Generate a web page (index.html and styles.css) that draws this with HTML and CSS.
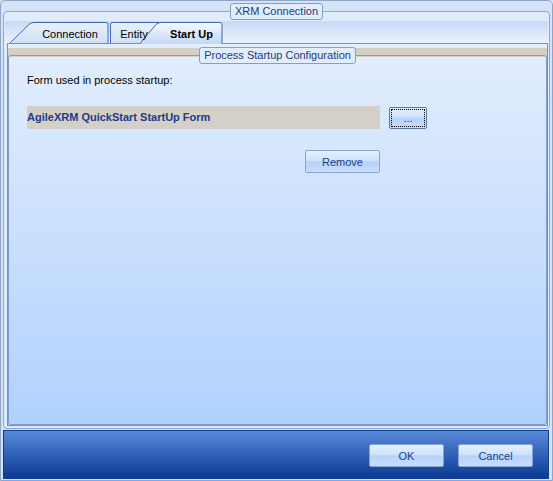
FILE: index.html
```html
<!DOCTYPE html>
<html>
<head>
<meta charset="utf-8">
<link rel="stylesheet" href="styles.css">
</head>
<body>
<div class="window">
  <fieldset class="frame">
    <legend class="frame-title">XRM Connection</legend>
    <div class="tabstrip">
      <svg class="tabshapes" width="230" height="23" viewBox="0 0 230 23">
        <defs>
          <linearGradient id="tabOff" x1="0" y1="0" x2="0" y2="1">
            <stop offset="0" stop-color="#e9f1fd"/>
            <stop offset="1" stop-color="#cfe0f8"/>
          </linearGradient>
          <linearGradient id="tabOn" x1="0" y1="0" x2="0" y2="1">
            <stop offset="0" stop-color="#f6f9ff"/>
            <stop offset="1" stop-color="#c3d8f5"/>
          </linearGradient>
        </defs>
        <path d="M5 22 L24 3.5 Q26 1.5 29 1.5 L101 1.5 Q103 1.5 103 3.5 L103 22" fill="url(#tabOff)" stroke="#4068b4" stroke-width="1"/>
        <path d="M105.5 22 L105.5 3.5 Q105.5 1.5 107.5 1.5 L160 1.5 L160 22" fill="url(#tabOff)" stroke="#4068b4" stroke-width="1"/>
        <path d="M135 23 L151 3.5 Q153 1.5 156 1.5 L215 1.5 Q217 1.5 217 3.5 L217 23 Z" fill="url(#tabOn)"/>
        <path d="M135 22.5 L151 3.5 Q153 1.5 156 1.5 L215 1.5 Q217 1.5 217 3.5 L217 22.5" fill="none" stroke="#4068b4" stroke-width="1"/>
      </svg>
      <div class="tablabels">
        <span class="tab tab-connection">Connection</span>
        <span class="tab tab-entity">Entity</span>
        <span class="tab tab-startup">Start Up</span>
      </div>
    </div>
    <div class="panel">
      <fieldset class="group">
        <legend class="group-title">Process Startup Configuration</legend>
        <div class="field-label">Form used in process startup:</div>
        <div class="form-row">
          <div class="form-value">AgileXRM QuickStart StartUp Form</div>
          <button class="btn btn-browse">...</button>
        </div>
        <div class="remove-row">
          <button class="btn btn-remove">Remove</button>
        </div>
      </fieldset>
    </div>
  </fieldset>
  <div class="footer">
    <button class="btn">OK</button>
    <button class="btn">Cancel</button>
  </div>
</div>
</body>
</html>
```

FILE: styles.css
```css
* { box-sizing: border-box; }
html, body { margin: 0; padding: 0; }
body {
  width: 553px;
  height: 481px;
  overflow: hidden;
  font-family: "Liberation Sans", Arial, sans-serif;
  font-size: 11px;
  background: #d6e4f7;
}
.window {
  width: 553px;
  height: 481px;
  border: 1px solid #8ea6c9;
  border-radius: 5px 5px 0 0;
  background: #d5e3f7;
  padding: 2px 2px 1px 2px;
  display: flex;
  flex-direction: column;
}
.frame {
  flex: 1;
  min-height: 0;
  min-width: 0;
  margin: 0;
  padding: 0 1px 1px 1px;
  border: 1px solid #8aa8d8;
  border-radius: 4px;
  background: #e0ebfb;
  display: flex;
  flex-direction: column;
}
.frame-title {
  margin: 0 auto;
  padding: 0 4px;
  border: 1px solid #7f9fd2;
  border-radius: 3px;
  background: #e2edfc;
  color: #1b3b7e;
  line-height: 15px;
}
.tabstrip {
  position: relative;
  z-index: 2;
  flex: none;
  height: 22px;
  margin-top: 1px;
  background: linear-gradient(#c6daf6, #ebf2fd);
}
.tabshapes {
  position: absolute;
  left: 0;
  top: 0;
  overflow: visible;
}
.tablabels {
  position: relative;
  display: flex;
  padding-left: 27px;
  padding-top: 6px;
  line-height: 15px;
  color: #000;
}
.tab { display: block; text-align: center; }
.tab-connection { width: 76px; }
.tab-entity { width: 52px; }
.tab-startup { width: 63px; font-weight: bold; }
.panel {
  flex: 1;
  display: flex;
  margin: 0 0 1px 2px;
  border: 1px solid #6e93d0;
  padding: 3px 0 0 0;
  background:
    linear-gradient(#d4d0c8, #d4d0c8) 0 4px / 100% 9px no-repeat,
    linear-gradient(#e4eefd, #b0d1fe);
}
.group {
  flex: 1;
  min-width: 0;
  margin: 0;
  padding: 0 18px;
  border: 1px solid #7d9dd2;
  border-radius: 3px;
}
.group-title {
  margin: 0 auto;
  padding: 0 4px;
  border: 1px solid #7f9fd2;
  border-radius: 3px;
  background: #e2edfc;
  color: #1b3b7e;
  line-height: 15px;
}
.field-label {
  margin-top: 9px;
  line-height: 15px;
  color: #000;
}
.form-row {
  display: flex;
  align-items: flex-start;
  gap: 9px;
  margin-top: 18px;
}
.form-value {
  width: 353px;
  height: 23px;
  line-height: 23px;
  background: #d4d0c8;
  color: #1c3a8a;
  font-weight: bold;
}
.btn {
  font: inherit;
  width: 75px;
  height: 23px;
  padding: 0;
  border: 1px solid #8aa5c9;
  border-radius: 2px;
  color: #15428b;
  background: linear-gradient(#e6f0ff 0%, #cfe2fd 45%, #b6d2fb 52%, #c7ddfd 100%);
}
.btn-browse {
  width: 38px;
  height: 22px;
  margin-top: 1px;
  border-color: #5a78a6;
  outline: 1px dotted #000;
  outline-offset: -3px;
  line-height: 14px;
}
.remove-row {
  display: flex;
  width: 353px;
  justify-content: flex-end;
  margin-top: 21px;
}
.footer {
  flex: none;
  height: 49px;
  margin: 1px 1px 0 0;
  border: 1px solid #133d8f;
  background: linear-gradient(#5789d9, #0c3a94);
  display: flex;
  justify-content: flex-end;
  align-items: flex-start;
  gap: 14px;
  padding: 13px 15px 0 0;
}
```
